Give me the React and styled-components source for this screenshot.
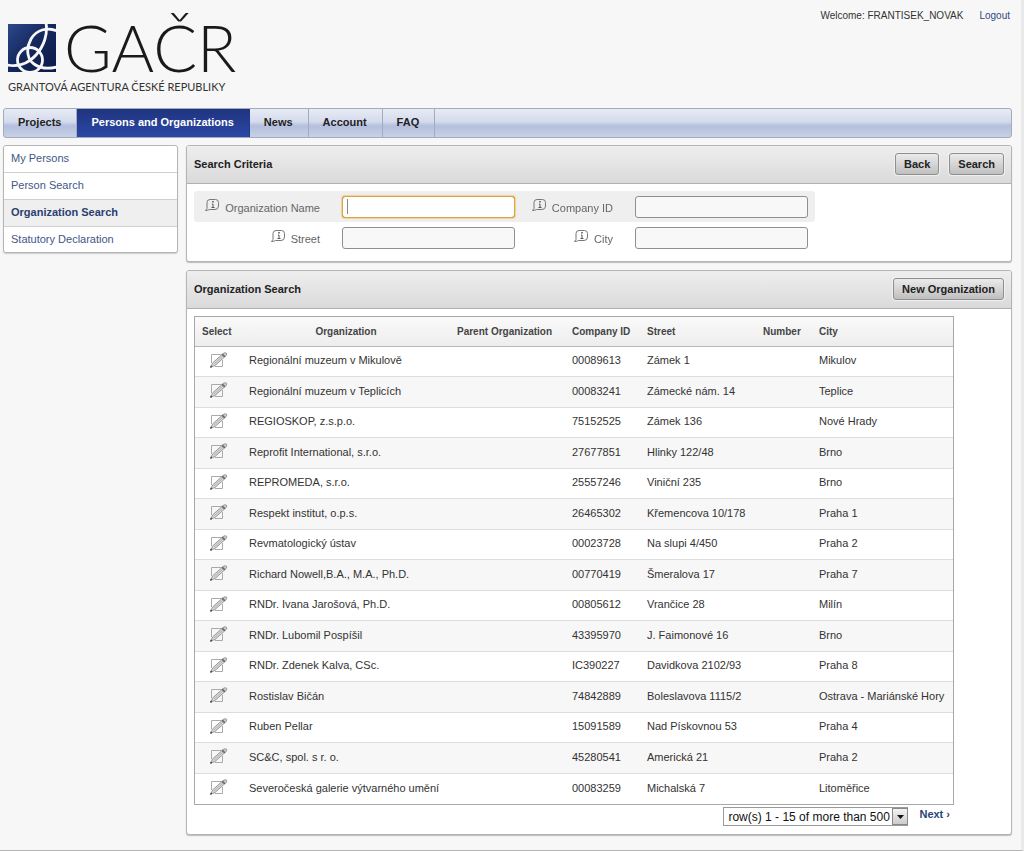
import React, { useState } from 'react';
import styled, { createGlobalStyle } from 'styled-components';

const GlobalStyle = createGlobalStyle`
  * {
    box-sizing: border-box;
  }
  body {
    margin: 0;
    background-color: #f7f7f7;
    color: #333;
    font-family: 'Liberation Sans', Arial, sans-serif;
    font-size: 11px;
  }
`;

const Page = styled.div`
  display: flex;
  flex-direction: column;
  min-height: 100vh;
  padding: 0 9px 15px 3px;
  border-right: 3px solid #e9e9e9;
  border-bottom: 1px solid #b4b4b4;
`;

const Header = styled.header`
  display: flex;
  justify-content: space-between;
  height: 108px;
`;

const Logo = styled.a`
  display: flex;
  flex-direction: column;
  padding: 8px 0 0 5px;
  color: #1a1a1a;
  text-decoration: none;
`;

const LogoTop = styled.span`
  display: flex;
  align-items: flex-end;
  gap: 8px;
  height: 64px;
`;

const LogoName = styled.span`
  height: 64px;
  font-family: Lato, sans-serif;
  font-size: 65px;
  font-weight: 300;
  line-height: 79px;
`;

const LogoTagline = styled.span`
  margin-top: 7px;
  color: #333;
  font-family: Lato, sans-serif;
  font-size: 11px;
  line-height: 15px;
  white-space: nowrap;
`;

const UserBar = styled.div`
  display: flex;
  gap: 16px;
  padding: 9px 2px 0 0;
  font-size: 10px;
  line-height: 14px;
`;

const Link = styled.a`
  color: #33497f;
  text-decoration: none;
`;

const Nav = styled.nav`
  display: flex;
  height: 30px;
  border: 1px solid #a3abbd;
  border-radius: 3px;
  background: linear-gradient(#e8ebf5, #d5dbec 45%, #b3bfdd 60%, #c7d0e6);
`;

const NavItem = styled.a`
  padding: 0 15px 0 14px;
  border-right: 1px solid ${(props) => (props.$active ? '#22388a' : '#a3abc4')};
  background: ${(props) => (props.$active ? 'linear-gradient(#20347f, #2a48a6)' : 'none')};
  color: ${(props) => (props.$active ? '#fff' : '#222')};
  font-weight: bold;
  line-height: 27px;
  text-decoration: none;
`;

const Body = styled.div`
  display: flex;
  flex: 1;
  gap: 8px;
  padding-top: 7px;
`;

const SideMenu = styled.nav`
  flex: 0 0 175px;
  align-self: flex-start;
  border: 1px solid #b5b5b5;
  border-radius: 3px;
  background-color: #fff;
  box-shadow: 0 1px 1px #ccc;
`;

const SideItem = styled.a`
  display: block;
  height: 27px;
  padding-left: 7px;
  border-bottom: 1px solid #d0d0d0;
  background-color: ${(props) => (props.$active ? '#efefef' : '#fff')};
  color: ${(props) => (props.$active ? '#2a3f6f' : '#3f5686')};
  font-weight: ${(props) => (props.$active ? 'bold' : 'normal')};
  line-height: 25px;
  text-decoration: none;

  &:first-child {
    border-radius: 3px 3px 0 0;
  }
  &:last-child {
    height: 25px;
    border-bottom: 0;
    border-radius: 0 0 3px 3px;
  }
`;

const Main = styled.main`
  display: flex;
  flex: 1;
  flex-direction: column;
  gap: 8px;
  min-width: 0;
`;

const Panel = styled.section`
  flex: ${(props) => (props.$grow ? '1' : 'none')};
  border: 1px solid #b5b5b5;
  border-radius: 3px;
  background-color: #fff;
  box-shadow: 0 1px 1px #bbb;
`;

const PanelHeader = styled.div`
  display: flex;
  align-items: center;
  gap: 10px;
  height: 38px;
  padding: 0 7px 1px;
  border-bottom: 1px solid #b0b0b0;
  border-radius: 2px 2px 0 0;
  background: linear-gradient(#eee, #dadada);
`;

const PanelTitle = styled.h2`
  flex: 1;
  margin: 0;
  color: #222;
  font-size: 11px;
`;

const Button = styled.button`
  height: 22px;
  padding: 0 8px;
  border: 1px solid #8f8f8f;
  border-radius: 3px;
  background: linear-gradient(#ebebeb, #bfbfbf);
  box-shadow: 0 0 0 1px #f0f0f0;
  color: #222;
  font-family: inherit;
  font-size: 11px;
  font-weight: bold;
`;

const SearchForm = styled.form`
  padding: 7px 7px 8px;
`;

const FormRow = styled.div`
  display: grid;
  grid-template-columns: 148px 173px 120px 173px;
  align-items: center;
  width: fit-content;
  height: 31px;
  padding-right: 7px;
  border-radius: 3px;
  background-color: ${(props) => (props.$shaded ? '#efefef' : 'transparent')};
`;

const Label = styled.label`
  display: flex;
  justify-content: flex-end;
  gap: 6px;
  padding: 2px 22px 0 0;
  color: #666;
  line-height: 18px;
  white-space: nowrap;
`;

const TextBox = styled.input`
  width: 100%;
  height: 22px;
  padding: 0 4px;
  border: 1px solid #8f8f8f;
  border-radius: 3px;
  background-color: #f8f8f8;
  font-family: inherit;
  font-size: 13px;

  &:focus {
    border-color: #c0903a;
    background: #fff ${(props) => (props.$empty ? 'linear-gradient(#888, #888) 4px center / 1px 15px no-repeat' : '')};
    outline: 1px solid #d9a548;
    outline-offset: -1px;
    box-shadow: 0 0 1px 1px #f0d49a;
  }
`;

const Results = styled.div`
  width: fit-content;
  padding: 7px 0 7px 7px;
`;

const Table = styled.table`
  border: 1px solid #a8a8a8;
  border-spacing: 0;
  table-layout: fixed;
  width: 760px;
`;

const HeadCell = styled.th`
  height: 30px;
  padding: 0 7px 1px;
  border-bottom: 1px solid #b8b8b8;
  background: linear-gradient(#fafafa, #ededed);
  color: #444;
  font-size: 10px;
  text-align: ${(props) => props.$align || 'left'};
  white-space: nowrap;
`;

const Row = styled.tr`
  height: 30px;

  &:nth-child(even) {
    height: 31px;
    background-color: #f7f7f7;
  }
  &:not(:last-child) td {
    border-bottom: 1px solid #ddd;
  }
`;

const Cell = styled.td`
  padding: 0 7px 3px;
  text-align: ${(props) => props.$align || 'left'};
  white-space: nowrap;
`;

const EditLink = styled.a`
  display: flex;
  justify-content: center;
`;

const Pager = styled.div`
  display: flex;
  justify-content: flex-end;
  gap: 11px;
  padding: 2px 4px 0 0;
`;

const SelectWrapper = styled.span`
  display: flex;
  position: relative;
`;

const Select = styled.select`
  appearance: none;
  height: 19px;
  padding: 0 17px 0 4px;
  border: 1px solid #999;
  border-radius: 0;
  background-color: #fff;
  color: #111;
  font-family: inherit;
  font-size: 12px;
`;

const SelectArrow = styled.span`
  display: flex;
  align-items: center;
  justify-content: center;
  position: absolute;
  top: 1px;
  right: 0;
  width: 16px;
  height: 17px;
  border: 1px solid #888;
  background: linear-gradient(#f2f2f2, #ccc);
  pointer-events: none;
`;

const NextLink = styled.a`
  color: #2a4578;
  font-weight: bold;
  line-height: 14px;
  text-decoration: none;
`;

const LogoMark = () => (
  <svg width="48" height="48" viewBox="0 0 48 48" aria-hidden="true">
    <defs>
      <linearGradient id="mark" x1="0" y1="0" x2="1" y2="1">
        <stop offset="0" stopColor="#2c4a8c" />
        <stop offset="0.5" stopColor="#14265c" />
        <stop offset="1" stopColor="#0c1a48" />
      </linearGradient>
      <clipPath id="square">
        <rect width="48" height="48" />
      </clipPath>
    </defs>
    <g clipPath="url(#square)">
      <rect width="48" height="48" fill="url(#mark)" />
      <g fill="none" stroke="#f7f7f7" strokeWidth="2.8">
        <path d="M38 -1C40 10 36 22 28 31C20 40 9 43 -1 41" />
        <path d="M49 7C40 3 29 5 23 15C17 26 20 36 26 40C33 45 41 45 49 43" />
        <circle cx="22" cy="36" r="12.5" />
      </g>
    </g>
  </svg>
);

const InfoIcon = () => (
  <svg width="14" height="12" viewBox="0 0 14 12" fill="none" stroke="#777" aria-hidden="true">
    <path d="M.5 11.500L2 9.500V3.500Q2 .5 5 .5H10.500Q13.500 .5 13.500 3.500V7Q13.500 10.500 10 10.500H4.500Q3 11.500 .5 11.500Z" />
    <path d="M7 5H8V8.500M6.500 8.500H9.500" stroke="#555" />
    <path d="M8 2V3.500" stroke="#555" strokeWidth="1.5" />
  </svg>
);

const EditIcon = () => (
  <svg width="18" height="17" viewBox="0 0 18 17" fill="none" aria-hidden="true">
    <path d="M11 2.500H1.500V11M5 14.500H12.500V8" stroke="#aaa" />
    <path d="M1 15L2.500 11L12 2.500L14.500 5L5 13.500Z" fill="#d6d6d6" stroke="#999" />
    <path d="M4 12L13 4" stroke="#b5b5b5" />
    <path d="M12.500 2L14 1Q17.500 0 16.500 3L15 4.500Z" fill="#ccc" stroke="#999" />
    <path d="M12 2L15 5" stroke="#666" strokeWidth="1.5" />
    <path d="M.5 15.500L1.500 14" stroke="#444" strokeWidth="1.5" />
  </svg>
);

const navItems = ['Projects', 'Persons and Organizations', 'News', 'Account', 'FAQ'];
const sideItems = ['My Persons', 'Person Search', 'Organization Search', 'Statutory Declaration'];
const columnWidths = [47, 208, 115, 75, 116, 56, 141];

const organizations = [
  ['Regionální muzeum v Mikulově', '00089613', 'Zámek 1', 'Mikulov'],
  ['Regionální muzeum v Teplicích', '00083241', 'Zámecké nám. 14', 'Teplice'],
  ['REGIOSKOP, z.s.p.o.', '75152525', 'Zámek 136', 'Nové Hrady'],
  ['Reprofit International, s.r.o.', '27677851', 'Hlinky 122/48', 'Brno'],
  ['REPROMEDA, s.r.o.', '25557246', 'Viniční 235', 'Brno'],
  ['Respekt institut, o.p.s.', '26465302', 'Křemencova 10/178', 'Praha 1'],
  ['Revmatologický ústav', '00023728', 'Na slupi 4/450', 'Praha 2'],
  ['Richard Nowell,B.A., M.A., Ph.D.', '00770419', 'Šmeralova 17', 'Praha 7'],
  ['RNDr. Ivana Jarošová, Ph.D.', '00805612', 'Vrančice 28', 'Milín'],
  ['RNDr. Lubomil Pospíšil', '43395970', 'J. Faimonové 16', 'Brno'],
  ['RNDr. Zdenek Kalva, CSc.', 'IC390227', 'Davidkova 2102/93', 'Praha 8'],
  ['Rostislav Bičán', '74842889', 'Boleslavova 1115/2', 'Ostrava - Mariánské Hory'],
  ['Ruben Pellar', '15091589', 'Nad Pískovnou 53', 'Praha 4'],
  ['SC&C, spol. s r. o.', '45280541', 'Americká 21', 'Praha 2'],
  ['Severočeská galerie výtvarného umění', '00083259', 'Michalská 7', 'Litoměřice'],
];

function Field({ id, label, value, onChange, autoFocus }) {
  return (
    <>
      <Label htmlFor={id}>
        <InfoIcon />
        {label}
      </Label>
      <TextBox
        id={id}
        name={id}
        value={value}
        onChange={onChange}
        autoFocus={autoFocus}
        $empty={value === ''}
      />
    </>
  );
}

function App() {
  const [criteria, setCriteria] = useState({ name: '', companyId: '', street: '', city: '' });

  const handleChange = (event) => {
    setCriteria({ ...criteria, [event.target.name]: event.target.value });
  };

  const handleSubmit = (event) => {
    event.preventDefault();
  };

  return (
    <Page>
      <GlobalStyle />
      <Header>
        <Logo href="#home">
          <LogoTop>
            <LogoMark />
            <LogoName>GAČR</LogoName>
          </LogoTop>
          <LogoTagline>GRANTOVÁ AGENTURA ČESKÉ REPUBLIKY</LogoTagline>
        </Logo>
        <UserBar>
          <span>Welcome: FRANTISEK_NOVAK</span>
          <Link href="#logout">Logout</Link>
        </UserBar>
      </Header>
      <Nav>
        {navItems.map((item) => (
          <NavItem key={item} href="#nav" $active={item === 'Persons and Organizations'}>
            {item}
          </NavItem>
        ))}
      </Nav>
      <Body>
        <SideMenu>
          {sideItems.map((item) => (
            <SideItem key={item} href="#menu" $active={item === 'Organization Search'}>
              {item}
            </SideItem>
          ))}
        </SideMenu>
        <Main>
          <Panel>
            <PanelHeader>
              <PanelTitle>Search Criteria</PanelTitle>
              <Button type="button">Back</Button>
              <Button type="submit" form="search">Search</Button>
            </PanelHeader>
            <SearchForm id="search" onSubmit={handleSubmit}>
              <FormRow $shaded>
                <Field id="name" label="Organization Name" value={criteria.name} onChange={handleChange} autoFocus />
                <Field id="companyId" label="Company ID" value={criteria.companyId} onChange={handleChange} />
              </FormRow>
              <FormRow>
                <Field id="street" label="Street" value={criteria.street} onChange={handleChange} />
                <Field id="city" label="City" value={criteria.city} onChange={handleChange} />
              </FormRow>
            </SearchForm>
          </Panel>
          <Panel $grow>
            <PanelHeader>
              <PanelTitle>Organization Search</PanelTitle>
              <Button type="button">New Organization</Button>
            </PanelHeader>
            <Results>
              <Table>
                <colgroup>
                  {columnWidths.map((width, index) => (
                    <col key={index} width={width} />
                  ))}
                </colgroup>
                <thead>
                  <tr>
                    <HeadCell>Select</HeadCell>
                    <HeadCell $align="center">Organization</HeadCell>
                    <HeadCell>Parent Organization</HeadCell>
                    <HeadCell>Company ID</HeadCell>
                    <HeadCell>Street</HeadCell>
                    <HeadCell>Number</HeadCell>
                    <HeadCell>City</HeadCell>
                  </tr>
                </thead>
                <tbody>
                  {organizations.map(([name, companyId, street, city]) => (
                    <Row key={name}>
                      <Cell $align="center">
                        <EditLink href="#edit" aria-label={name}>
                          <EditIcon />
                        </EditLink>
                      </Cell>
                      <Cell>{name}</Cell>
                      <Cell />
                      <Cell>{companyId}</Cell>
                      <Cell>{street}</Cell>
                      <Cell />
                      <Cell>{city}</Cell>
                    </Row>
                  ))}
                </tbody>
              </Table>
              <Pager>
                <SelectWrapper>
                  <Select aria-label="Rows">
                    <option>row(s) 1 - 15 of more than 500</option>
                  </Select>
                  <SelectArrow>
                    <svg width="7" height="4" viewBox="0 0 7 4" aria-hidden="true">
                      <path d="M0 0H7L3.500 4Z" fill="#111" />
                    </svg>
                  </SelectArrow>
                </SelectWrapper>
                <NextLink href="#next">Next ›</NextLink>
              </Pager>
            </Results>
          </Panel>
        </Main>
      </Body>
    </Page>
  );
}

export default App;
